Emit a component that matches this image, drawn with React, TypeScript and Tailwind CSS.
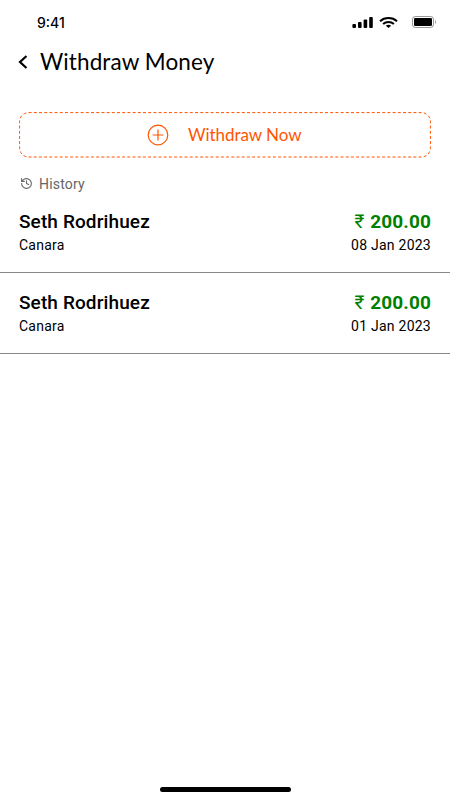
import { LuHistory } from "react-icons/lu";

type Withdrawal = {
  name: string;
  bank: string;
  amount: string;
  date: string;
};

const withdrawals: Withdrawal[] = [
  { name: "Seth Rodrihuez", bank: "Canara", amount: "200.00", date: "08 Jan 2023" },
  { name: "Seth Rodrihuez", bank: "Canara", amount: "200.00", date: "01 Jan 2023" },
];

function StatusBar() {
  return (
    <div className="flex h-11 items-center justify-between pl-[37px] pr-[13px]">
      <span className="pt-px font-['Inter',sans-serif] text-[14px] font-medium leading-5">
        9:41
      </span>
      <div className="flex items-center">
        <svg width="21" height="11" viewBox="0 0 21 11" fill="currentColor">
          <rect x="0.4" y="7" width="3.6" height="4" rx="1" />
          <rect x="6" y="5" width="3.6" height="6" rx="1" />
          <rect x="11.6" y="2.6" width="3.6" height="8.4" rx="1" />
          <rect x="17.2" y="0" width="3.6" height="11" rx="1" />
        </svg>
        <svg className="ml-[6px]" width="19" height="11" viewBox="0 0 19 11" fill="none" stroke="currentColor" strokeWidth="2">
          <path d="M1 4.2C5.6 0 13.4 0 18 4.2" />
          <path d="M4.1 7.1c3-2.8 7.8-2.8 10.8 0" />
          <path d="M6.8 8.7c1.6-1.3 3.8-1.3 5.4 0L9.5 11z" fill="currentColor" stroke="none" />
        </svg>
        <svg className="ml-[14px]" width="25" height="12" viewBox="0 0 25 12">
          <rect x="0.5" y="0.5" width="21" height="11" rx="2.8" fill="none" stroke="#000" strokeOpacity="0.4" />
          <rect x="2" y="2" width="18" height="8" rx="1.3" />
          <path d="M23 4v4c1.4-.6 1.4-3.4 0-4z" fillOpacity="0.4" />
        </svg>
      </div>
    </div>
  );
}

function WithdrawButton() {
  return (
    <button className="relative flex h-[46px] w-full items-center pl-[128px] text-[#ff5500]">
      {/* dashed outline */}
      <svg className="absolute inset-0 h-full w-full" fill="none" stroke="currentColor">
        <rect x="0.6" y="0.6" width="410.8" height="44.4" rx="9" strokeDasharray="3 2.2" />
      </svg>
      <svg width="22" height="22" viewBox="0 0 22 22" fill="none" stroke="currentColor" strokeWidth="1.2">
        <circle cx="11" cy="11" r="9.8" />
        <path d="M11 5.6v10.8M5.6 11h10.8" />
      </svg>
      <span className="ml-[19px] font-['Lato',sans-serif] text-[17px] leading-6 tracking-[-0.05px]">
        Withdraw Now
      </span>
    </button>
  );
}

function HistoryRow({ item }: { item: Withdrawal }) {
  return (
    <li className="flex h-[81px] justify-between border-b border-[#888] px-[19px] pt-[18px]">
      <div>
        <p className="text-[19px] font-medium leading-6 tracking-[0.12px]">{item.name}</p>
        <p className="text-[14px] leading-[22px] tracking-[0.25px]">{item.bank}</p>
      </div>
      <div className="text-right">
        <p className="text-[19px] font-bold leading-6 tracking-[0.12px] text-[#008000]">
          <span className="mr-px font-normal">₹</span> {item.amount}
        </p>
        <p className="text-[14px] leading-[22px] tracking-[0.25px]">{item.date}</p>
      </div>
    </li>
  );
}

export default function App() {
  return (
    <div className="flex h-[800px] w-[450px] flex-col bg-white font-['Roboto',sans-serif] text-black">
      <StatusBar />
      <header className="flex h-9 items-center pl-[18px]">
        <svg width="11" height="14" viewBox="0 0 11 14" fill="none" stroke="currentColor" strokeWidth="2.2">
          <path d="M8.5 1L2 7l6.5 6" />
        </svg>
        <h1 className="ml-[11px] font-['Lato',sans-serif] text-[22.5px] leading-9 tracking-[0.1px]">
          Withdraw Money
        </h1>
      </header>
      <main className="flex-1 pt-8">
        <div className="px-[19px]">
          <WithdrawButton />
        </div>
        <div className="mt-4 flex h-[18px] items-center gap-[6px] px-5 text-[#666]">
          <LuHistory size={13} />
          <h2 className="pt-0.5 text-[14px] leading-5 tracking-[0.2px]">History</h2>
        </div>
        <ul>
          {withdrawals.map((item) => (
            <HistoryRow key={item.date} item={item} />
          ))}
        </ul>
      </main>
      <div className="mx-auto mb-2 h-[5px] w-[131px] rounded-full bg-black" />
    </div>
  );
}
